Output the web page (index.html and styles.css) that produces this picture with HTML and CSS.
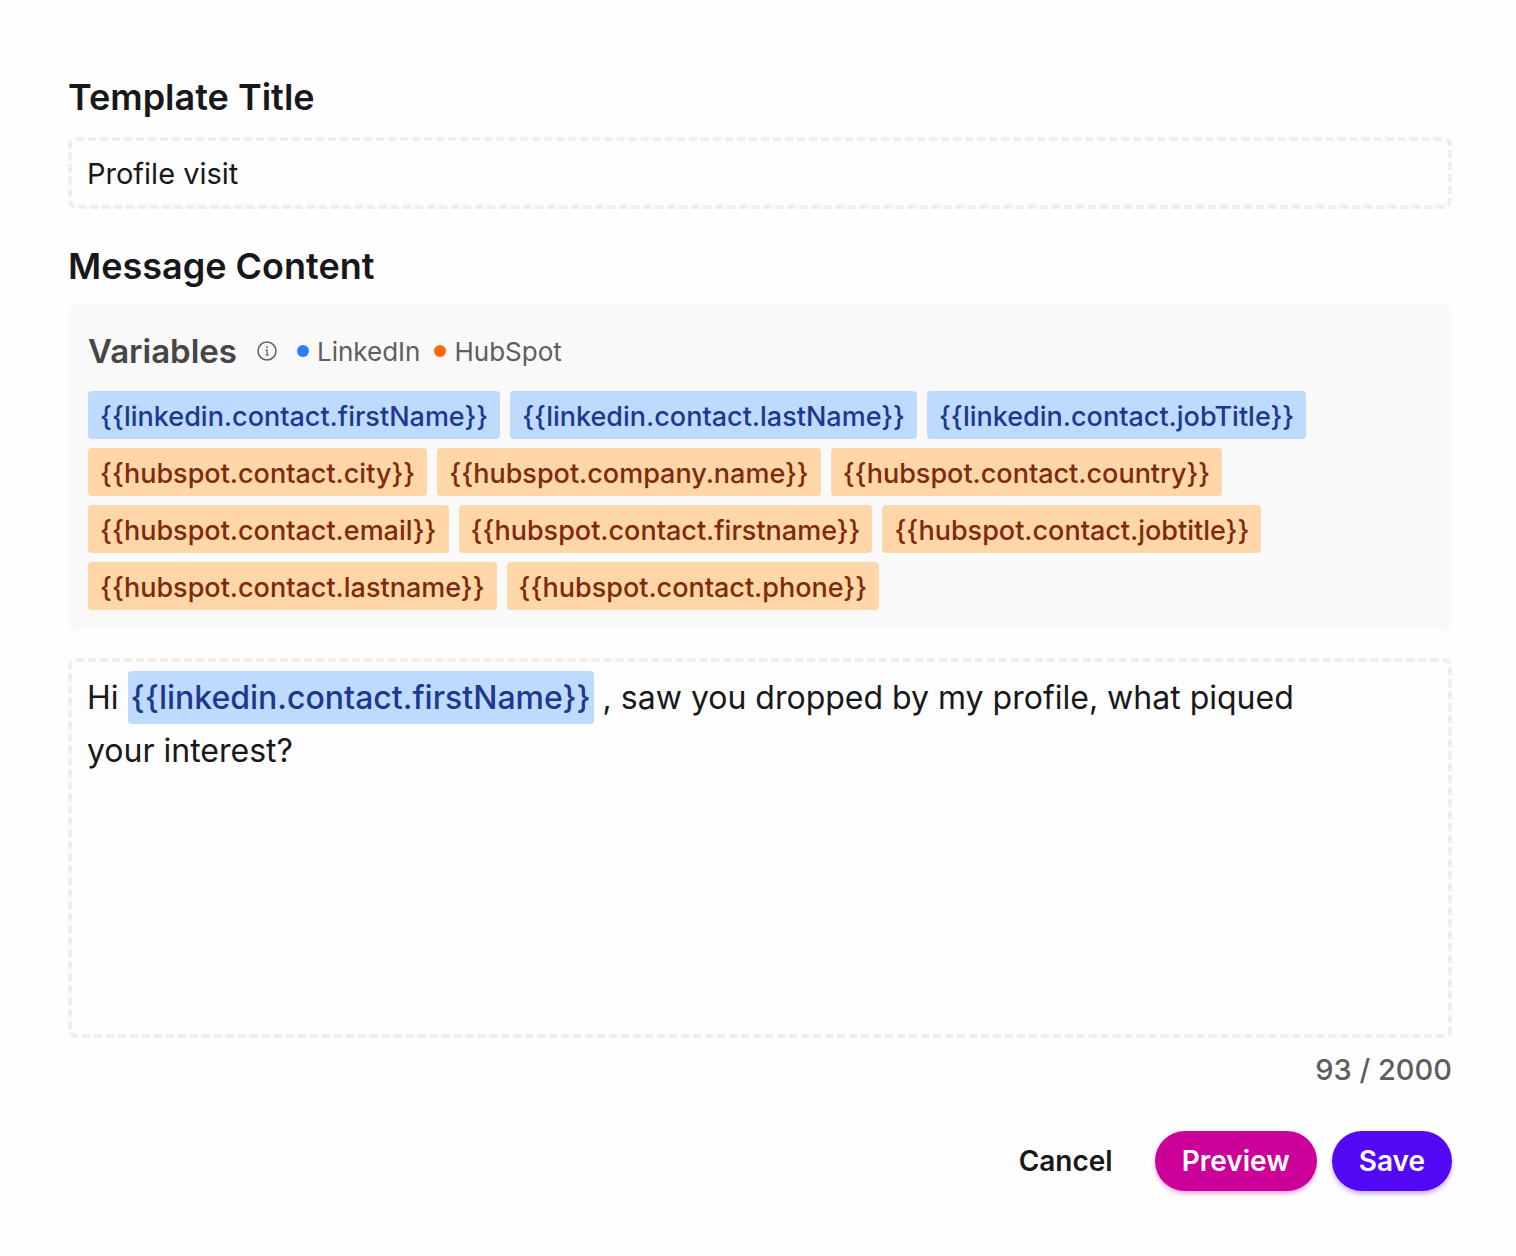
FILE: index.html
```html
<!DOCTYPE html>
<html lang="en">

<head>
  <meta charset="UTF-8">
  <meta name="viewport" content="width=device-width, initial-scale=1.0">
  <title>Edit template</title>
  <link rel="stylesheet" href="styles.css">
</head>

<body>
  <form class="template-form">
    <label class="heading" for="title">Template Title</label>
    <input class="field title-input" id="title" type="text" value="Profile visit">

    <h2 class="heading" id="message-label">Message Content</h2>
    <section class="variables">
      <div class="variables-header">
        <h3>Variables</h3>
        <svg class="info" viewBox="0 0 20 20" fill="none" stroke="currentColor" stroke-width="1.5" stroke-linecap="round" stroke-linejoin="round">
          <circle cx="10" cy="10" r="9" />
          <path d="M9 8.9H10.1V14M8.8 14H11.4" stroke-width="1.2" />
          <circle cx="10" cy="6" r="0.9" fill="currentColor" stroke="none" />
        </svg>
        <span class="source linkedin-source">LinkedIn</span>
        <span class="source hubspot-source">HubSpot</span>
      </div>
      <div class="chips">
        <button type="button" class="chip linkedin">{{linkedin.contact.firstName}}</button>
        <button type="button" class="chip linkedin">{{linkedin.contact.lastName}}</button>
        <button type="button" class="chip linkedin">{{linkedin.contact.jobTitle}}</button>
        <button type="button" class="chip hubspot">{{hubspot.contact.city}}</button>
        <button type="button" class="chip hubspot">{{hubspot.company.name}}</button>
        <button type="button" class="chip hubspot">{{hubspot.contact.country}}</button>
        <button type="button" class="chip hubspot">{{hubspot.contact.email}}</button>
        <button type="button" class="chip hubspot">{{hubspot.contact.firstname}}</button>
        <button type="button" class="chip hubspot">{{hubspot.contact.jobtitle}}</button>
        <button type="button" class="chip hubspot">{{hubspot.contact.lastname}}</button>
        <button type="button" class="chip hubspot">{{hubspot.contact.phone}}</button>
      </div>
    </section>

    <div class="field editor" contenteditable="true" role="textbox" aria-multiline="true" aria-labelledby="message-label" spellcheck="false">Hi <span class="token">{{linkedin.contact.firstName}}</span> , saw you dropped by my profile, what piqued your interest?</div>
    <p class="counter">93 / 2000</p>

    <div class="actions">
      <button type="button" class="btn cancel">Cancel</button>
      <button type="button" class="btn preview">Preview</button>
      <button type="submit" class="btn save">Save</button>
    </div>
  </form>
</body>

</html>
```

FILE: styles.css
```css
* {
  box-sizing: border-box;
}

body {
  margin: 0;
  background: #fefefe;
  color: #18181b;
  font-family: Inter, "Liberation Sans", sans-serif;
}

button,
input {
  font-family: inherit;
}

.template-form {
  display: flex;
  flex-direction: column;
  padding: 72px 64px 64px 68px;
}

.heading {
  margin: 0;
  font-size: 36px;
  font-weight: 600;
  line-height: 50px;
}

.field {
  border: 4px dashed #eee;
  border-radius: 8px;
  background: #fdfdfd;
  color: #18181b;
}

.title-input {
  width: 100%;
  height: 72px;
  margin: 15px 0 32px;
  padding: 0 15px;
  font-size: 29px;
}

.variables {
  margin-top: 14px;
  padding: 20px;
  border-radius: 8px;
  background: #f9f9f9;
}

.variables-header {
  display: flex;
  align-items: center;
  height: 52px;
  margin-bottom: 14px;
  color: #5e5e5e;
}

.variables-header h3 {
  margin: 0;
  color: #464646;
  font-size: 33px;
  font-weight: 600;
}

.info {
  width: 20px;
  height: 20px;
  margin: 0 20px;
}

.source {
  display: flex;
  align-items: center;
  gap: 8px;
  margin-right: 14px;
  font-size: 26px;
}

.source::before {
  width: 12px;
  height: 12px;
  border-radius: 50%;
  content: "";
}

.linkedin-source::before {
  background: #2b7fff;
}

.hubspot-source::before {
  background: #ff6900;
}

.chips {
  display: flex;
  flex-wrap: wrap;
  gap: 9px 10px;
}

.chip {
  height: 48px;
  padding: 3px 12px 0;
  border: 0;
  border-radius: 4px;
  font-size: 27px;
  font-weight: 500;
}

.linkedin {
  background: #bedbff;
  color: #1c398e;
}

.hubspot {
  background: #ffd6a7;
  color: #7e2a0c;
}

.editor {
  min-height: 380px;
  margin-top: 28px;
  padding: 9px 96px 9px 15px;
  font-size: 32px;
  line-height: 53px;
}

.token {
  display: inline-block;
  padding: 0 3px;
  border-radius: 4px;
  background: #bedbff;
  color: #1c398e;
  font-weight: 500;
}

.counter {
  margin: 11px 0 40px;
  color: #5e5e5e;
  font-size: 29px;
  font-weight: 500;
  line-height: 42px;
  text-align: right;
}

.actions {
  display: flex;
  justify-content: flex-end;
  gap: 15px;
}

.btn {
  height: 60px;
  padding: 0 27px;
  border: 0;
  border-radius: 30px;
  color: #fff;
  font-size: 28px;
  font-weight: 600;
}

.cancel {
  background: none;
  color: #18181b;
}

.preview {
  background: #cc0099;
  box-shadow: 0 3px 4px rgba(204, 0, 153, 0.3);
}

.save {
  background: #5409f5;
  box-shadow: 0 3px 4px rgba(84, 9, 245, 0.3);
}
```
